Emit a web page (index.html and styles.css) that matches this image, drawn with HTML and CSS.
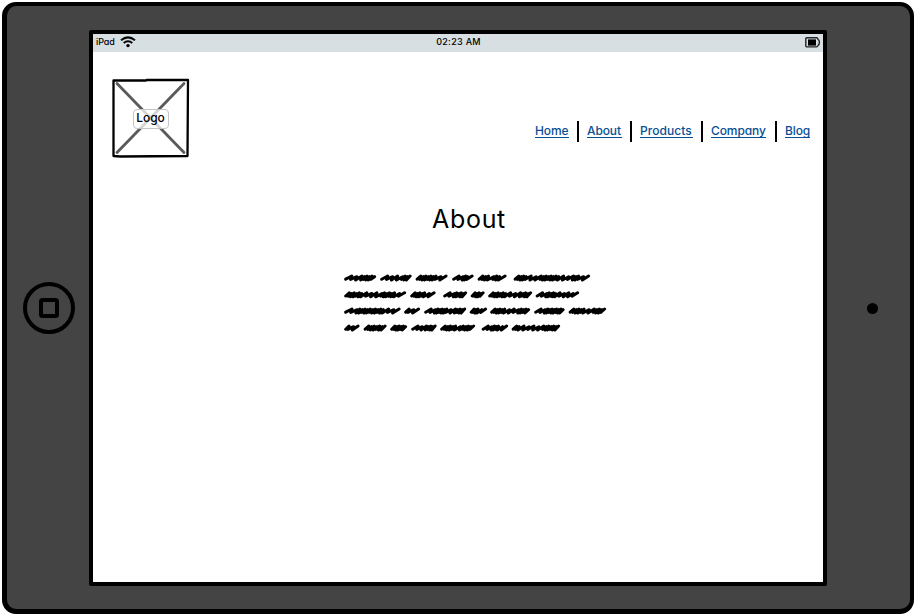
FILE: index.html
```html
<!DOCTYPE html>
<html lang="en">
<head>
<meta charset="utf-8">
<title>About</title>
<link rel="stylesheet" href="styles.css">
</head>
<body>
<div class="device">
  <div class="bezel">
    <svg class="home-button" viewBox="0 0 54 54"><circle cx="27" cy="27" r="24"/><rect x="19" y="19" width="16" height="16" rx="1.5"/></svg>
  </div>
  <div class="screen">
    <div class="status">
      <div class="carrier"><span class="carrier-name">iPad</span>
        <svg class="wifi" viewBox="0 0 16 12"><path d="M1 4.2Q8-1.4 15 4.2M3.7 7Q8 3.6 12.3 7"/><circle cx="8" cy="9.6" r="1.7"/></svg>
      </div>
      <span class="time">02:23 AM</span>
      <svg class="battery" viewBox="0 0 16 11"><path d="M2 .8H11.6Q12.6.8 13 2.3Q14.4 3 14.4 5.3T13 8.4Q12.6 9.900 11.6 9.900H2Q.8 9.900 .8 8.700V2Q.8.8 2 .8Z"/><rect x="3" y="2.400" width="8" height="6.200"/></svg>
    </div>
    <header class="header">
      <div class="logo">
        <svg class="logo-box" viewBox="0 0 78 80"><path class="cross" d="M5 5.500L72 74.500M72 5.500L5 74.500"/><path class="frame" d="M1.500 2.500L34 2.500L34.500 2L76 2L75.500 78L8 78.500L1.500 78Z"/></svg>
        <span class="logo-label">Logo</span>
      </div>
      <nav class="nav">
        <a class="home" href="#">Home</a><a class="about" href="#">About</a><a class="products" href="#">Products</a><a class="company" href="#">Company</a><a class="blog" href="#">Blog</a>
      </nav>
    </header>
    <main class="main">
      <h1>About</h1>
      <svg class="copy" viewBox="0 0 266 70" aria-hidden="true"></svg>
    </main>
  </div>
  <div class="bezel"><span class="camera"></span></div>
</div>
<script src="scribble.js"></script>
</body>
</html>
```

FILE: styles.css
```css
* { box-sizing: border-box; }
body { margin: 0; padding: 2px; background: #fff; color: #000; font-family: Inter, "Liberation Sans", sans-serif; font-feature-settings: "cv11"; }
.device { width: 912px; height: 612px; display: grid; grid-template-columns: 82px 738px 1fr; background: #444; border: 4px solid #000; border-left-width: 5px; border-bottom-width: 5px; border-radius: 14px; }
.bezel { display: flex; align-items: center; justify-content: center; padding-top: 1px; }
.bezel:first-child { padding-left: 1px; }
.home-button { width: 54px; height: 54px; fill: none; stroke: #000; stroke-width: 4; }
.camera { width: 11px; height: 11px; border-radius: 50%; background: #000; margin-left: 7px; }
.screen { margin-top: 24px; height: 556px; border: 4px solid #000; border-radius: 2px; background: #fff; }
.status { height: 18px; background: #d7dfe2; display: grid; grid-template-columns: 1fr auto 1fr; align-items: center; padding: 0 2px 2px 3px; font-size: 9px; font-weight: 500; line-height: 16px; }
.carrier { display: flex; align-items: center; gap: 5px; }
.carrier-name { width: 19px; letter-spacing: -.1px; }
.wifi { width: 16px; height: 12px; fill: none; stroke: #000; stroke-width: 2; }
.wifi circle { fill: #000; stroke: none; }
.time { letter-spacing: .3px; }
.battery { width: 16px; height: 11px; justify-self: end; fill: none; stroke: #222; stroke-width: 1.4; }
.battery rect { fill: #000; stroke: none; }
.header { height: 107px; padding: 26px 13px 0 19px; display: flex; justify-content: space-between; align-items: flex-start; }
.logo { width: 78px; height: 80px; display: grid; place-items: center; }
.logo > * { grid-area: 1 / 1; }
.logo-box { width: 78px; height: 80px; fill: none; }
.cross { stroke: #5a5a5a; stroke-width: 2.8; stroke-linecap: round; }
.frame { stroke: #000; stroke-width: 2.3; stroke-linejoin: round; }
.logo-label { width: 36px; height: 20px; margin-top: 1px; margin-right: 1px; border: 1px solid #c4c4c4; border-radius: 4px; background: rgba(255,255,255,.75); font-size: 12px; font-weight: 500; line-height: 16px; text-align: center; z-index: 1; }
.nav { display: flex; margin-top: 43px; }
.nav a { height: 21px; color: #084f94; font-size: 12px; font-weight: 500; letter-spacing: -.1px; line-height: 20px; text-decoration: none; white-space: nowrap; padding-left: 8px; border-left: 2px solid #000; background: linear-gradient(#084f94, #084f94) left 8px top 16px / calc(100% - 16px) 1px no-repeat; }
.nav .home { width: 43px; border-left: 0; padding-left: 1px; background-position: 1px 16px; background-size: 34px 1px; }
.nav .about { width: 53px; background-size: 35px 1px; }
.nav .products { width: 71px; background-size: 53px 1px; letter-spacing: .06px; }
.nav .company { width: 74px; background-size: 55px 1px; }
.nav .blog { width: 35px; background-size: 26px 1px; }
.main { display: flex; flex-direction: column; align-items: center; }
h1 { margin: 42px 0 0 22px; font-size: 25px; line-height: 36px; font-weight: 400; letter-spacing: .7px; }
.copy { width: 266px; height: 70px; margin: 28px 0 0 33px; fill: none; stroke: #000; stroke-width: 3; stroke-linecap: round; stroke-linejoin: round; }
```

FILE: scribble.js
```js
// Each word: start, end and stroke rhythm (l = loose, d = dense).
const lines = [
  [13, [[2.5,34,"lllddddd"],[38.5,69.5,"llllddd"],[74,105.5,"dddddddll"],[110.5,131.5,"llddl"],[136,164.5,"dddlddl"],[172,248,"ddddllldddddddlllddll"]]],
  [29.8, [[2.5,64,"ddddddlllldddddll"],[68.5,93.5,"dddddll"],[101.5,125,"llddddd"],[129,142.5,"ddddd"],[146.5,190,"ddddddllldddd"],[194,237,"llddddlllll"]]],
  [46, [[2.5,58.5,"llddddddddddlll"],[62.5,78,"dll"],[82.5,124,"lldddddlldddd"],[128,145,"dddll"],[148.5,188,"dddddllldddd"],[192.5,222.5,"lldddddddd"],[227,264,"dddddlldddd"]]],
  [63, [[2.5,17.5,"dll"],[22,44.5,"ddddddd"],[48.5,65,"dddddd"],[69.5,94.5,"llldddd"],[98.5,133,"dddddlddddd"],[140,166,"lldddll"],[170,218,"ddllllldddddd"]]]
];
const svg = document.querySelector(".copy");
for (const [y, words] of lines) {
  let d = "";
  for (const [start, end, rhythm] of words) {
    const weights = [...rhythm].map(c => c === "l" ? 6 : 3);
    const scale = (end - start - 3.6) / weights.reduce((a, b) => a + b);
    let x = start + 1.2;
    d += `M${x} ${y + 1.2}`;
    weights.forEach((weight, i) => {
      x += weight * scale;
      d += `L${x + 1} ${y - (i % 2 ? 1.3 : 2)}`;
      if (i < weights.length - 1) d += `L${x - .2} ${y + (i % 3 ? 2 : 1.4)}`;
    });
  }
  const path = document.createElementNS("http://www.w3.org/2000/svg", "path");
  path.setAttribute("d", d);
  svg.append(path);
}
```
